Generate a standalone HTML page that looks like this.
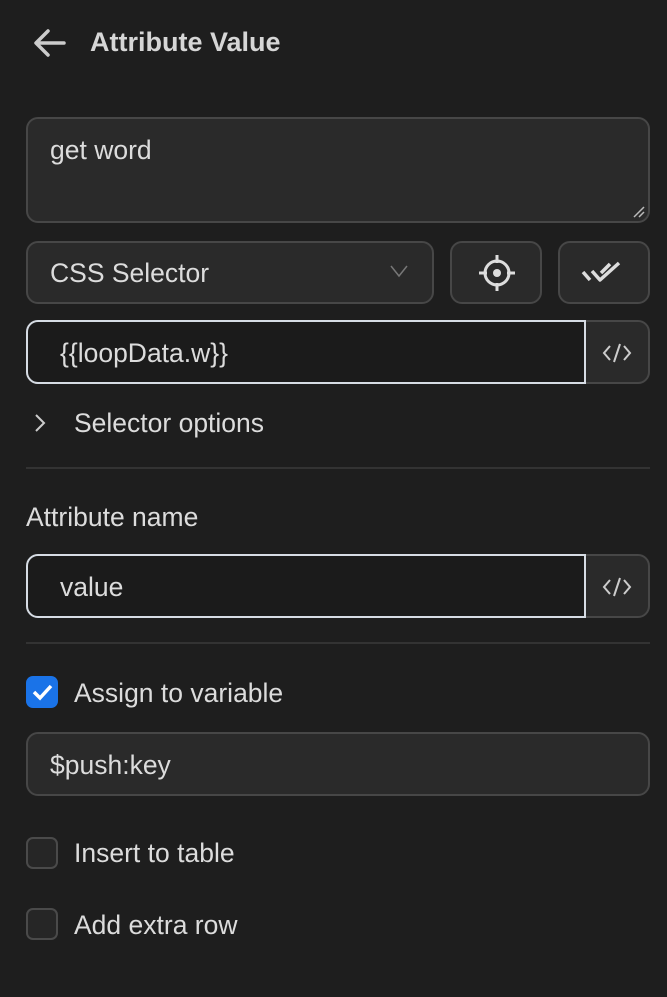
<!DOCTYPE html><html><head><style>
body{margin:0;width:667px;height:997px;background:#1e1e1e;font-family:"Liberation Sans",sans-serif;color:#dcdcdc;position:relative;overflow:hidden}
.a{position:absolute;box-sizing:border-box}
.f{background:#2a2a2a;border:2px solid #474747;border-radius:12px}
.t{position:absolute;font-size:26.5px;white-space:nowrap}
.hr{position:absolute;left:26px;width:624px;height:2px;background:#333}
.cb{border:2px solid #4a4a4a;border-radius:7px;background:#262626;width:32px;height:32px}
</style></head><body>
<svg class="a" style="left:33px;top:28px" width="34" height="30" viewBox="0 0 34 30"><path d="M31 15H4M15 3L3 15l12 12" stroke="#ccc" stroke-width="3.5" fill="none" stroke-linecap="round" stroke-linejoin="round"/></svg>
<div class="t" style="left:90px;top:27px;font-size:27px;font-weight:bold;color:#d6d6d6">Attribute Value</div>
<div class="a f" style="left:26px;top:117px;width:624px;height:106px"></div>
<div class="t" style="left:50px;top:135px">get word</div>
<svg class="a" style="left:632px;top:205px" width="14" height="14"><path d="M2 12L12 2M7 12L12 7" stroke="#bbb" stroke-width="1.5"/></svg>
<div class="a f" style="left:26px;top:241px;width:408px;height:63px"></div>
<div class="t" style="left:50px;top:258px">CSS Selector</div>
<svg class="a" style="left:389px;top:264px" width="20" height="14"><path d="M2 2l8 10 8-10" stroke="#777" stroke-width="1.5" fill="none"/></svg>
<div class="a f" style="left:450px;top:241px;width:92px;height:63px"></div>
<svg class="a" style="left:475px;top:251px" width="44" height="44" viewBox="0 0 44 44"><circle cx="22" cy="22" r="12" stroke="#ddd" stroke-width="3" fill="none"/><circle cx="22" cy="22" r="4" fill="#ddd"/><path d="M22 4v8M22 32v8M4 22h8M32 22h8" stroke="#ddd" stroke-width="3"/></svg>
<div class="a f" style="left:558px;top:241px;width:92px;height:63px"></div>
<svg class="a" style="left:581px;top:260px" width="46" height="26" viewBox="0 0 46 26"><path d="M2 12l7 8M11 11l8 9L38 3M20 13l9-9" stroke="#ddd" stroke-width="3.5" fill="none" stroke-linejoin="round"/></svg>
<div class="a" style="left:26px;top:320px;width:624px;height:64px;border:2px solid #474747;border-radius:12px;background:#2a2a2a"></div>
<div class="a" style="left:26px;top:320px;width:560px;height:64px;border:2px solid #d6dce4;border-radius:12px 0 0 12px;background:#1b1b1b"></div>
<div class="t" style="left:60px;top:338px">{{loopData.w}}</div>
<svg class="a" style="left:601px;top:342px" width="32" height="22"><path d="M9 4L3 11l6 7M23 4l6 7-6 7M19 2L13 20" stroke="#ccc" stroke-width="2" fill="none"/></svg>
<svg class="a" style="left:33px;top:413px" width="14" height="20"><path d="M3 2l8 8-8 8" stroke="#ccc" stroke-width="2" fill="none"/></svg>
<div class="t" style="left:74px;top:408px">Selector options</div>
<div class="hr" style="top:467px"></div>
<div class="t" style="left:26px;top:502px">Attribute name</div>
<div class="a" style="left:26px;top:554px;width:624px;height:64px;border:2px solid #474747;border-radius:12px;background:#2a2a2a"></div>
<div class="a" style="left:26px;top:554px;width:560px;height:64px;border:2px solid #d6dce4;border-radius:12px 0 0 12px;background:#1b1b1b"></div>
<div class="t" style="left:60px;top:572px">value</div>
<svg class="a" style="left:601px;top:576px" width="32" height="22"><path d="M9 4L3 11l6 7M23 4l6 7-6 7M19 2L13 20" stroke="#ccc" stroke-width="2" fill="none"/></svg>
<div class="hr" style="top:642px"></div>
<div class="a" style="left:26px;top:676px;width:32px;height:32px;border-radius:7px;background:#1a73e8"></div>
<svg class="a" style="left:26px;top:676px" width="32" height="32"><path d="M8 16l6 6 11-12" stroke="#fff" stroke-width="3.5" fill="none"/></svg>
<div class="t" style="left:74px;top:678px">Assign to variable</div>
<div class="a f" style="left:26px;top:732px;width:624px;height:64px"></div>
<div class="t" style="left:50px;top:750px">$push:key</div>
<div class="a cb" style="left:26px;top:837px"></div>
<div class="t" style="left:74px;top:838px">Insert to table</div>
<div class="a cb" style="left:26px;top:908px"></div>
<div class="t" style="left:74px;top:910px">Add extra row</div>
</body></html>
